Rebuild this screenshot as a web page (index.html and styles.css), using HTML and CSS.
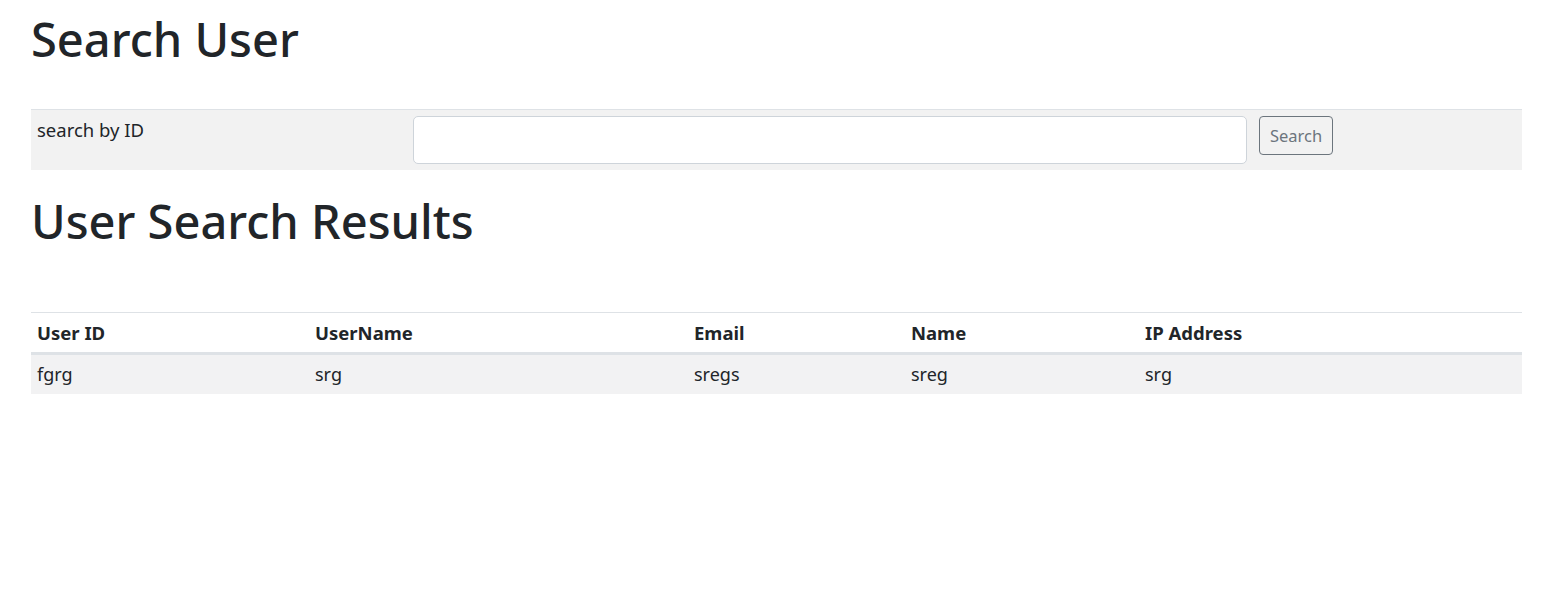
FILE: index.html
```html
<!DOCTYPE html>
<html lang="en">
<head>
<meta charset="utf-8">
<title>Search User</title>
<link rel="stylesheet" href="styles.css">
</head>
<body>
<main class="page">
  <h1 class="title">Search User</h1>
  <table class="search-table">
    <colgroup>
      <col class="c-label">
      <col class="c-input">
      <col class="c-btn">
    </colgroup>
    <tbody>
      <tr>
        <td class="cell">search by ID</td>
        <td class="cell"><input class="field" type="text"></td>
        <td class="cell"><button class="btn" type="button">Search</button></td>
      </tr>
    </tbody>
  </table>
  <h1 class="title title-results">User Search Results</h1>
  <table class="results">
    <colgroup>
      <col class="r1">
      <col class="r2">
      <col class="r3">
      <col class="r4">
      <col class="r5">
    </colgroup>
    <thead>
      <tr>
        <th class="hcell">User ID</th>
        <th class="hcell">UserName</th>
        <th class="hcell">Email</th>
        <th class="hcell">Name</th>
        <th class="hcell">IP Address</th>
      </tr>
    </thead>
    <tbody>
      <tr class="stripe">
        <td class="dcell">fgrg</td>
        <td class="dcell">srg</td>
        <td class="dcell">sregs</td>
        <td class="dcell">sreg</td>
        <td class="dcell">srg</td>
      </tr>
    </tbody>
  </table>
</main>
</body>
</html>
```
FILE: styles.css
```css
html, body {
  margin: 0;
  padding: 0;
  background: #ffffff;
}
body {
  font-family: "Noto Sans", "Open Sans", "DejaVu Sans", sans-serif;
  font-size: 18px;
  line-height: 1.5;
  color: #212529;
}
.page {
  padding: 0 41px 0 31px;
}
.title {
  margin: 0;
  font-size: 47px;
  font-weight: 500;
  line-height: 56px;
  padding-top: 11px;
  margin-bottom: 42px;
}
.title-results {
  padding-top: 23px;
  margin-bottom: 63px;
}
.search-table {
  width: 100%;
  table-layout: fixed;
  border-collapse: collapse;
  background: #f2f2f2;
  border-top: 1px solid #dee2e6;
}
.c-label { width: 376px; }
.c-input { width: 846px; }
.cell {
  padding: 6px;
  vertical-align: top;
}
.cell:first-child {
  font-size: 18.5px;
}
.field {
  display: block;
  box-sizing: border-box;
  width: 100%;
  height: 48px;
  margin: 0;
  padding: 7px 15px;
  font: inherit;
  color: #212529;
  background: #ffffff;
  border: 1px solid #ced4da;
  border-radius: 5px;
}
.btn {
  display: block;
  box-sizing: border-box;
  height: 39px;
  width: 74px;
  padding: 0 8px;
  margin: 0;
  font-family: inherit;
  font-size: 16.5px;
  color: #6c757d;
  background: transparent;
  border: 1px solid #6c757d;
  border-radius: 4px;
}
.results {
  width: 100%;
  table-layout: fixed;
  border-collapse: collapse;
  border-top: 1px solid #dee2e6;
}
.r1 { width: 278px; }
.r2 { width: 379px; }
.r3 { width: 217px; }
.r4 { width: 234px; }
.hcell {
  text-align: left;
  font-size: 18.5px;
  font-weight: 700;
  padding: 5px 6px;
  height: 29px;
  border-bottom: 3px solid #dee2e6;
}
.dcell {
  padding: 5px 6px;
  height: 29px;
}
.stripe {
  background: #f2f2f3;
}
```
